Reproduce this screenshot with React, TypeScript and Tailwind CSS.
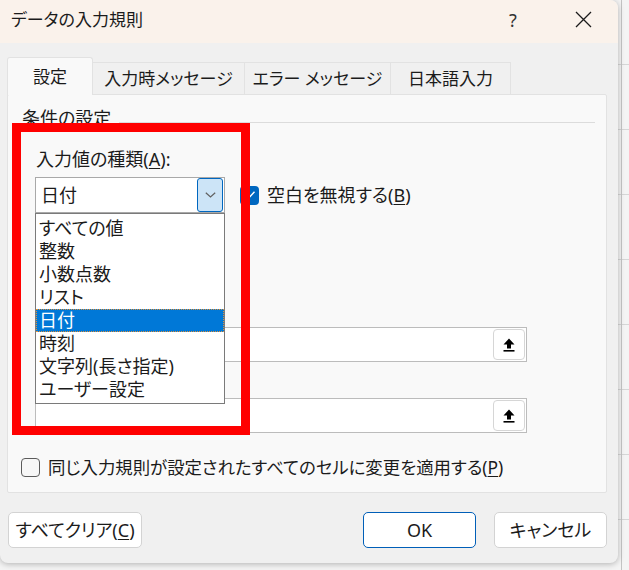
import React from "react";

const font =
  "font-['Noto_Sans','Noto_Sans_CJK_JP',sans-serif] [font-feature-settings:'palt']";

const listItems = [
  "すべての値",
  "整数",
  "小数点数",
  "リスト",
  "日付",
  "時刻",
  "文字列(長さ指定)",
  "ユーザー設定",
];

function Checkbox({ checked }: { checked?: boolean }) {
  if (checked) {
    return (
      <span className="w-[19px] h-[19px] rounded-[4px] bg-[#0067c0] flex items-center justify-center shrink-0">
        <svg width="12" height="10" viewBox="0 0 12 10">
          <path d="M1.5 5.2 4.5 8.2 10.5 1.8" fill="none" stroke="#fff" strokeWidth="1.4" />
        </svg>
      </span>
    );
  }
  return (
    <span className="w-[19px] h-[19px] rounded-[4px] border border-[#5c5c5c] bg-[#f7f7f7] shrink-0" />
  );
}

function UploadIcon() {
  return (
    <svg width="14" height="16" viewBox="0 0 14 16">
      <path d="M7 1.5 1.5 7.5H5v4h4v-4h3.5z" fill="#000" />
      <rect x="1.5" y="13" width="11" height="1.6" fill="#000" />
    </svg>
  );
}

function RangeField({ className = "" }: { className?: string }) {
  return (
    <div
      className={`ml-[27px] w-[492px] h-[35px] bg-white border border-[#bcbcbc] flex items-center justify-end pr-px ${className}`}
    >
      <button className="w-[32px] h-[31px] rounded-[4px] bg-white border border-[#d6d6d6] flex items-center justify-center">
        <UploadIcon />
      </button>
    </div>
  );
}

export default function App() {
  return (
    <div
      className={`relative w-[629px] h-[570px] overflow-hidden bg-[#f4f4f4] text-[#1b1b1b] ${font} bg-[linear-gradient(to_right,transparent_621px,#c4c4c4_621px,#c4c4c4_622px,transparent_622px),repeating-linear-gradient(to_bottom,transparent_0px,transparent_64px,#d6d6d6_64px,#d6d6d6_65px,transparent_65px,transparent_57px)]`}
    >
      {/* Dialog */}
      <div className="w-[618px] h-[563px] flex flex-col bg-[#f0f0f0] rounded-tr-[8px] rounded-b-[8px] shadow-[0_1px_6px_rgba(0,0,0,0.28)] overflow-hidden">
        {/* Title bar */}
        <div className="h-[43px] bg-[#faf2eb] flex items-center pl-[11px] pb-[3px] shrink-0">
          <span className="text-[17px]">データの入力規則</span>
          <span className="ml-auto w-[20px] text-center text-[18px] text-[#333]">?</span>
          <span className="ml-[48px] mr-[23px] w-[24px] h-[24px] flex items-center justify-center mb-[2px]">
            <svg width="17" height="17" viewBox="0 0 17 17">
              <path d="M1 1 16 16M16 1 1 16" stroke="#1b1b1b" strokeWidth="1.3" />
            </svg>
          </span>
        </div>

        {/* Tabs */}
        <div className="flex items-end h-[37px] mt-[14px] pl-[7px] shrink-0 text-[17px]">
          <div className="relative z-10 -mb-px w-[86px] h-[38px] bg-[#f9f9f9] border border-b-0 border-[#e2e2e2] rounded-t-[3px] flex items-center justify-center">
            設定
          </div>
          <div className="w-[152px] h-[32px] border-t border-r border-[#e2e2e2] flex items-center justify-center">
            入力時メッセージ
          </div>
          <div className="w-[146px] h-[32px] border-t border-r border-[#e2e2e2] flex items-center justify-center">
            エラー メッセージ
          </div>
          <div className="w-[120px] h-[32px] border-t border-r border-[#e2e2e2] flex items-center justify-center">
            日本語入力
          </div>
        </div>

        {/* Panel */}
        <div className="relative mx-[7px] w-[600px] h-[399px] bg-[#f9f9f9] border border-[#e2e2e2] rounded-[2px] flex flex-col shrink-0 text-[18px]">
          <div className="mt-[12px] h-[22px] flex items-center pl-[14px]">
            <span>条件の設定</span>
            <span className="flex-1 h-px bg-[#dcdcdc] ml-[8px] mr-[11px] mt-[8px]" />
          </div>

          <div className="mt-[19px] h-[22px] flex items-center pl-[28px]">
            入力値の種類(<span className="underline underline-offset-2">A</span>):
          </div>

          <div className="mt-[7px] h-[36px] flex items-center pl-[27px]">
            <div className="w-[190px] h-[36px] bg-white border border-[#a9a9a9] flex items-center pl-[5px] pr-px">
              <span className="flex-1">日付</span>
              <span className="w-[26px] h-[34px] bg-[#cce4f7] border border-[#0067c0] rounded-[3px] flex items-center justify-center">
                <svg width="11" height="6" viewBox="0 0 11 6">
                  <path d="M.8.8 5.5 5 10.2.8" fill="none" stroke="#606060" strokeWidth="1.2" />
                </svg>
              </span>
            </div>
            <label className="ml-[15px] flex items-center gap-[8px]">
              <Checkbox checked />
              <span>
                空白を無視する(<span className="underline underline-offset-2">B</span>)
              </span>
            </label>
          </div>

          <RangeField className="mt-[114px]" />
          <RangeField className="mt-[36px]" />

          <label className="mt-[23px] h-[22px] flex items-center pl-[13px] gap-[8px] text-[17.4px]">
            <Checkbox />
            <span>
              同じ入力規則が設定されたすべてのセルに変更を適用する(
              <span className="underline underline-offset-2">P</span>)
            </span>
          </label>

          {/* Open dropdown list */}
          <div className="absolute left-[27px] top-[118px] w-[190px] h-[191px] bg-white border border-[#7a7a7a] pt-[3px]">
            {listItems.map((item) => (
              <div
                key={item}
                className={`h-[23px] pl-[2px] leading-[21px] border ${
                  item === "日付"
                    ? "bg-[#0078d7] text-white border-dotted border-[#e0913a]"
                    : "border-transparent"
                }`}
              >
                {item}
              </div>
            ))}
          </div>
        </div>

        {/* Buttons */}
        <div className="mt-[19px] h-[36px] flex pl-[8px] pr-[11px] text-[18px] shrink-0">
          <button className="w-[134px] h-[36px] bg-white border border-[#d3d3d3] rounded-[5px]">
            すべてクリア(<span className="underline underline-offset-2">C</span>)
          </button>
          <button className="ml-auto w-[113px] h-[36px] bg-white border border-[#005fb8] rounded-[5px]">
            OK
          </button>
          <button className="ml-[18px] w-[113px] h-[36px] bg-white border border-[#d3d3d3] rounded-[5px]">
            キャンセル
          </button>
        </div>
      </div>

      {/* Red annotation frame */}
      <div className="absolute left-[12px] top-[123px] w-[238px] h-[312px] border-[9px] border-[#ff0000]" />
    </div>
  );
}
